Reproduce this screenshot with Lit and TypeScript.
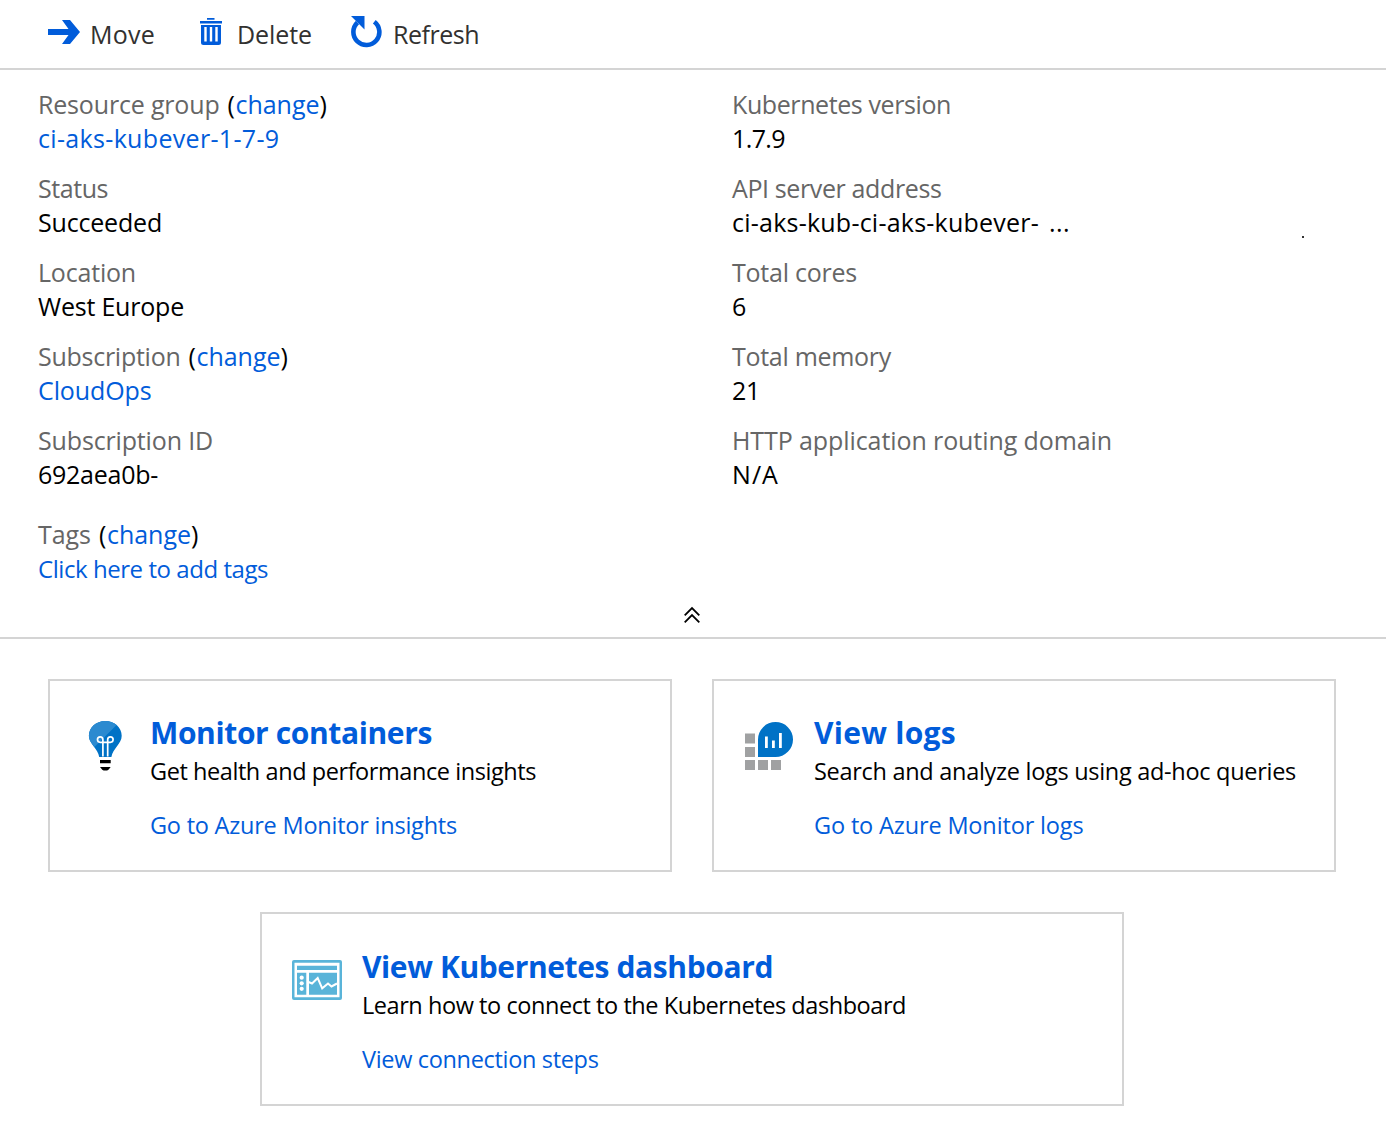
import { LitElement, html, css, svg } from "lit";
import { customElement, property } from "lit/decorators.js";

/** Text tracked so that its advance equals a given width in pixels. */
@customElement("fit-text")
class FitText extends LitElement {
  @property() text = "";
  @property({ type: Number }) width = 0;

  static styles = css`
    :host { display: inline-block; white-space: pre; }
  `;

  updated() {
    const span = this.renderRoot.querySelector("span") as HTMLElement;
    span.style.letterSpacing = "0px";
    const natural = span.getBoundingClientRect().width;
    const tracking = (this.width - natural) / this.text.length;
    span.style.letterSpacing = `${tracking.toFixed(3)}px`;
  }

  render() {
    return html`<span>${this.text}</span>`;
  }
}

const fit = (text: string, width: number) =>
  html`<fit-text .text=${text} .width=${width}></fit-text>`;

type Text = [string, number];
interface Field { label: Text; change?: boolean; value: Text; link?: boolean; more?: boolean; kind?: string }

const left: Field[] = [
  { label: ["Resource group", 181.5], change: true, value: ["ci-aks-kubever-1-7-9", 241.5], link: true },
  { label: ["Status", 70], value: ["Succeeded", 124] },
  { label: ["Location", 98], value: ["West Europe", 146] },
  { label: ["Subscription", 142.5], change: true, value: ["CloudOps", 113.5], link: true },
  { label: ["Subscription ID", 175], value: ["692aea0b-", 120] },
  { label: ["Tags", 53], change: true, value: ["Click here to add tags", 230], link: true, kind: "tags" },
];

const right: Field[] = [
  { label: ["Kubernetes version", 219], value: ["1.7.9", 53] },
  { label: ["API server address", 209.5], value: ["ci-aks-kub-ci-aks-kubever-", 307], more: true },
  { label: ["Total cores", 125], value: ["6", 14] },
  { label: ["Total memory", 159], value: ["21", 28] },
  { label: ["HTTP application routing domain", 380], value: ["N/A", 47] },
];

const moveIcon = svg`<svg class="move" width="32" height="26" viewBox="0 0 32 26" fill="#015cda">
  <path d="M0 10h20.5L14 1h8l10 12-10 12h-8l6.500-9H0z"/></svg>`;

const deleteIcon = svg`<svg class="delete" width="22" height="28" viewBox="0 0 22 28">
  <path fill="#015cda" d="M7 0h7.500v1.800H7zM0 3h22v2.500H0zM1 7h20v17.500q0 2.500-2.500 2.500h-15Q1 27 1 24.500z"/>
  <path fill="#fff" d="M4.300 9h2.400v14.500H4.300zM9.800 9h2.400v14.500H9.800zM15.300 9h2.400v14.500h-2.400z"/></svg>`;

const refreshIcon = svg`<svg class="refresh" width="32" height="33" viewBox="0 0 32 33">
  <path fill="none" stroke="#015cda" stroke-width="4.600" d="M7.500 7.500A13 13 0 1 0 24.300 6.700"/>
  <path fill="#015cda" d="M1 1h13.500v13.500L10 10z"/></svg>`;

const bulbIcon = svg`<svg class="icon" width="50" height="50" viewBox="0 0 50 50">
  <path fill="#0072c6" d="M25.300 0C34.500 0 41.700 6.500 41.700 14.800c0 8.200-9 12.700-10.300 21.200H19.200C18 27.500 8.900 23 8.900 14.800 8.900 6.500 16 0 25.300 0z"/>
  <path fill="#2b8ad0" d="M25.300 0c4.400 0 8.300 1.500 11.300 4L14.500 26C11.700 22.500 8.900 19.500 8.900 14.800 8.900 6.500 16 0 25.300 0z"/>
  <g fill="none" stroke="#fff" stroke-width="1.700">
    <path d="M22.900 35.500V18.600a2.700 2.700 0 1 0-2.700 2.700h10.200a2.700 2.700 0 1 0-2.700-2.700v16.900"/>
  </g>
  <path fill="#000" d="M20 39h10.700v3.200H20zM20 46h10.700q-2.700 3.500-3.700 3.500h-3.300Q22.700 49.500 20 46z"/></svg>`;

const logsIcon = svg`<svg class="icon" width="50" height="50" viewBox="0 0 50 50">
  <path fill="#a0a1a2" d="M1 12.500h10v10H1zM1 26h10v10H1zM1 39h10v10H1zM14 39h10v10H14zM27 39h10v10H27z"/>
  <path fill="#0072c6" d="M14 36V18.500A17.500 17.500 0 1 1 31.500 36z"/>
  <path fill="#fff" d="M21 15.500h2.800v11.500H21zM28 19.500h2.800V27H28zM35 12h2.800v15H35z"/></svg>`;

const dashIcon = svg`<svg class="icon" width="50" height="50" viewBox="0 0 50 50">
  <rect y="5" width="50" height="40" rx="2" fill="#59b4d9"/>
  <path fill="#fff" d="M2.500 7.700h45v34.600h-45z"/>
  <path fill="#59b4d9" d="M5 10.700h40v4.300H5zM5 17.700h9.300v22H5zM17 17.700h28v22H17z"/>
  <g fill="#fff"><circle cx="9.700" cy="22.700" r="2.100"/><circle cx="9.700" cy="28.300" r="2.100"/><circle cx="9.700" cy="33.800" r="2.100"/></g>
  <path fill="none" stroke="#fff" stroke-width="2" d="M16.500 27l3.500 1.500 5.700-5.500 4.500 10.300L36 28.500l3.500 3 5.500-3"/></svg>`;

const chevrons = svg`<svg class="chevrons" width="18" height="18" viewBox="0 0 18 18" fill="none" stroke="#000" stroke-width="1.800">
  <path d="M1.700 9.300L9 2l7.300 7.300M1.700 16.300L9 9l7.300 7.300"/></svg>`;

const cards = [
  { kind: "half", icon: bulbIcon, title: ["Monitor containers", 282], body: ["Get health and performance insights", 386], link: ["Go to Azure Monitor insights", 307] },
  { kind: "half", icon: logsIcon, title: ["View logs", 142], body: ["Search and analyze logs using ad-hoc queries", 482], link: ["Go to Azure Monitor logs", 269.5] },
  { kind: "wide", icon: dashIcon, title: ["View Kubernetes dashboard", 411], body: ["Learn how to connect to the Kubernetes dashboard", 544], link: ["View connection steps", 236.5] },
] as { kind: string; icon: unknown; title: Text; body: Text; link: Text }[];

@customElement("app-root")
class AppRoot extends LitElement {
  static styles = css`
    :host {
      display: block;
      height: 1137px;
      overflow: hidden;
      background: #fff;
      color: #000;
      font-family: "Open Sans", "Noto Sans", sans-serif;
      font-size: 25px;
      line-height: 34px;
    }
    svg { display: block; flex: none; }
    .toolbar {
      display: flex;
      box-sizing: border-box;
      height: 70px;
      padding: 17px 0 0 48px;
      border-bottom: 2px solid #d4d4d4;
      color: #323130;
    }
    .command { display: flex; }
    .move { margin: 2px 10px 0 0; }
    .delete { margin: 1px 15px 0 45px; }
    .refresh { margin: -2px 11px 0 38px; }
    .essentials {
      display: grid;
      box-sizing: border-box;
      grid-template-columns: 694px 1fr;
      padding: 17px 0 0 38px;
      height: 518px;
    }
    .column { display: flex; flex-direction: column; gap: 16px; }
    .field { height: 68px; white-space: nowrap; }
    .tags { margin-top: 10px; }
    .tags .value { font-size: 24px; line-height: 36px; }
    .line { display: flex; height: 34px; }
    .label { color: #666; }
    .change { margin-left: 8px; }
    .link { color: #015cda; }
    .more { display: flex; margin-left: 10px; }
    .speck { width: 2px; height: 2px; margin: 31px 0 0 232px; background: #333; }
    .collapse {
      display: flex;
      justify-content: center;
      box-sizing: border-box;
      height: 51px;
      padding: 18px 2px 0 0;
      border-bottom: 2px solid #d4d4d4;
    }
    .cards {
      display: flex;
      flex-wrap: wrap;
      justify-content: center;
      gap: 40px;
      padding: 40px 50px 0 48px;
    }
    .card {
      display: flex;
      gap: 20px;
      box-sizing: border-box;
      height: 193px;
      padding: 40px 0 0 30px;
      border: 2px solid #d4d4d4;
      font-size: 23.500px;
      white-space: nowrap;
    }
    .half { width: 624px; }
    .wide { width: 864px; height: 194px; padding-top: 41px; }
    .copy { display: flex; flex-direction: column; margin-top: -5px; }
    .title { font-size: 30px; font-weight: 700; height: 38px; }
    .body { height: 54px; }
  `;

  field(f: Field) {
    return html`<div class="field ${f.kind ?? ""}">
      <div class="line">
        <span class="label">${fit(...f.label)}</span>
        ${f.change
          ? html`<span class="change">${fit("(", 8)}<span class="link">${fit("change", 84)}</span>${fit(")", 8)}</span>`
          : ""}
      </div>
      <div class="line value ${f.link ? "link" : ""}">${fit(...f.value)}${f.more
        ? html`<span class="more">${fit("...", 21)}<span class="speck"></span></span>`
        : ""}</div>
    </div>`;
  }

  render() {
    return html`
      <div class="toolbar">
        <div class="command">${moveIcon}${fit("Move", 65)}</div>
        <div class="command">${deleteIcon}${fit("Delete", 75)}</div>
        <div class="command">${refreshIcon}${fit("Refresh", 86)}</div>
      </div>
      <div class="essentials">
        <div class="column">${left.map((f) => this.field(f))}</div>
        <div class="column">${right.map((f) => this.field(f))}</div>
      </div>
      <div class="collapse">${chevrons}</div>
      <div class="cards">
        ${cards.map((c) => html`<div class="card ${c.kind}">
          ${c.icon}
          <div class="copy">
            <div class="title link">${fit(...c.title)}</div>
            <div class="body">${fit(...c.body)}</div>
            <div class="link">${fit(...c.link)}</div>
          </div>
        </div>`)}
      </div>`;
  }
}
